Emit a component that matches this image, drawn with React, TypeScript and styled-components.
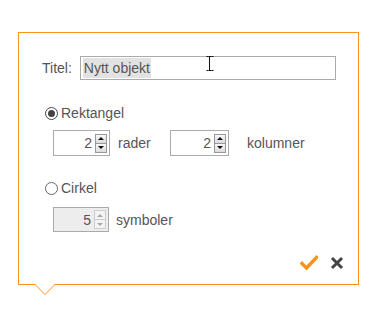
import React from "react";
import styled, { createGlobalStyle } from "styled-components";

const Global = createGlobalStyle`
  html, body { margin: 0; padding: 0; background: #fff; }
  body { font-family: "Liberation Sans", Arial, sans-serif; font-size: 14px; color: #555; }
`;

const Page = styled.div`
  box-sizing: border-box;
  min-height: 325px;
  padding: 32px 0 40px 18px;
`;

const Panel = styled.div`
  position: relative;
  box-sizing: border-box;
  width: 341px;
  height: 253px;
  border: 1px solid #f7941d;
  background: #fff;
  display: flex;
  flex-direction: column;
  padding: 23px 22px 0 23px;
`;

const Arrow = styled.svg`
  position: absolute;
  left: 16px;
  top: 100%;
  overflow: visible;
`;

const TitleRow = styled.div`
  display: flex;
  align-items: center;
  gap: 8px;
  height: 24px;
`;

const Label = styled.span`
  line-height: 16px;
  white-space: nowrap;
`;

const TextField = styled.div`
  position: relative;
  box-sizing: border-box;
  width: 258px;
  height: 24px;
  border: 1px solid #aaa;
  display: flex;
  align-items: center;
  padding-left: 2px;
`;

const Selected = styled.span`
  background: #e2e2e2;
  color: #555;
  line-height: 20px;
  padding: 0 1px;
`;

const IBeam = styled.svg`
  position: absolute;
  left: 125px;
  top: -2px;
`;

const RadioRow = styled.label<{ $top: number }>`
  display: flex;
  align-items: center;
  gap: 3px;
  margin-top: ${(p) => p.$top}px;
  margin-left: 3px;
  height: 16px;
`;

const RadioCircle = styled.span<{ $on?: boolean }>`
  box-sizing: border-box;
  width: 13px;
  height: 13px;
  border-radius: 50%;
  border: ${(p) => (p.$on ? "1.5px solid #444" : "1px solid #666")};
  display: flex;
  align-items: center;
  justify-content: center;
  &::after {
    content: "";
    display: ${(p) => (p.$on ? "block" : "none")};
    width: 7px;
    height: 7px;
    border-radius: 50%;
    background: #444;
  }
`;

const FieldRow = styled.div<{ $top: number }>`
  display: flex;
  align-items: center;
  margin-top: ${(p) => p.$top}px;
  margin-left: 11px;
`;

const Group = styled.div<{ $width?: number }>`
  display: flex;
  align-items: center;
  width: ${(p) => (p.$width ? `${p.$width}px` : "auto")};
`;

const SpinBox = styled.div<{ $w: number; $h: number; $disabled?: boolean }>`
  box-sizing: border-box;
  width: ${(p) => p.$w}px;
  height: ${(p) => p.$h}px;
  border: 1px solid #aaa;
  background: ${(p) => (p.$disabled ? "#ededed" : "#fff")};
  display: flex;
  align-items: center;
  justify-content: flex-end;
  padding-right: 2px;
  gap: 3px;
`;

const SpinValue = styled.span`
  color: #555;
  font-size: 14px;
`;

const SpinButtons = styled.div`
  display: flex;
  flex-direction: column;
`;

const SpinBtn = styled.div<{ $disabled?: boolean }>`
  box-sizing: border-box;
  width: 12px;
  height: 10px;
  border: 1px solid ${(p) => (p.$disabled ? "#ccc" : "#999")};
  background: ${(p) => (p.$disabled ? "#f4f4f4" : "linear-gradient(#f8f8f8, #dcdcdc)")};
  display: flex;
  align-items: center;
  justify-content: center;
  & + & {
    margin-top: -1px;
  }
`;

const Tri = styled.span<{ $down?: boolean; $disabled?: boolean }>`
  width: 0;
  height: 0;
  border-left: 3px solid transparent;
  border-right: 3px solid transparent;
  ${(p) =>
    p.$down
      ? `border-top: 3px solid ${p.$disabled ? "#aaa" : "#111"};`
      : `border-bottom: 3px solid ${p.$disabled ? "#aaa" : "#111"};`}
`;

const UnitLabel = styled.span<{ $gap: number }>`
  margin-left: ${(p) => p.$gap}px;
  white-space: nowrap;
`;

const Actions = styled.div`
  margin-top: auto;
  margin-bottom: 13px;
  margin-right: -8px;
  display: flex;
  justify-content: flex-end;
  align-items: center;
  gap: 12px;
`;

const IconBtn = styled.span`
  display: flex;
  cursor: pointer;
`;

function Spinner({ value, w, h, disabled }: { value: number; w: number; h: number; disabled?: boolean }) {
  return (
    <SpinBox $w={w} $h={h} $disabled={disabled}>
      <SpinValue>{value}</SpinValue>
      <SpinButtons>
        <SpinBtn $disabled={disabled}>
          <Tri $disabled={disabled} />
        </SpinBtn>
        <SpinBtn $disabled={disabled}>
          <Tri $down $disabled={disabled} />
        </SpinBtn>
      </SpinButtons>
    </SpinBox>
  );
}

export default function App() {
  return (
    <>
      <Global />
      <Page>
        <Panel>
          <TitleRow>
            <Label>Titel:</Label>
            <TextField>
              <Selected>Nytt objekt</Selected>
              <IBeam width="8" height="17" viewBox="0 0 8 17">
                <path d="M0.5 1.5 H2.5 M5.5 1.5 H7.5 M3.5 1.5 V15.5 M0.5 15.5 H2.5 M5.5 15.5 H7.5 M2.5 1.5 H5.5 M2.5 15.5 H5.5" stroke="#111" strokeWidth="1" fill="none" />
              </IBeam>
            </TextField>
          </TitleRow>

          <RadioRow $top={25}>
            <RadioCircle $on />
            <Label>Rektangel</Label>
          </RadioRow>

          <FieldRow $top={9}>
            <Group $width={117}>
              <Spinner value={2} w={57} h={26} />
              <UnitLabel $gap={8}>rader</UnitLabel>
            </Group>
            <Group>
              <Spinner value={2} w={59} h={26} />
              <UnitLabel $gap={18}>kolumner</UnitLabel>
            </Group>
          </FieldRow>

          <RadioRow $top={24}>
            <RadioCircle />
            <Label>Cirkel</Label>
          </RadioRow>

          <FieldRow $top={11}>
            <Group>
              <Spinner value={5} w={56} h={25} disabled />
              <UnitLabel $gap={7}>symboler</UnitLabel>
            </Group>
          </FieldRow>

          <Actions>
            <IconBtn>
              <svg width="18" height="16" viewBox="0 0 18 16">
                <path d="M2 8.5 L6.5 13 L16.5 2.5" stroke="#f7941d" strokeWidth="3.4" fill="none" strokeLinecap="square" />
              </svg>
            </IconBtn>
            <IconBtn>
              <svg width="14" height="14" viewBox="0 0 14 14">
                <path d="M2 2 L12 12 M12 2 L2 12" stroke="#444" strokeWidth="3" fill="none" strokeLinecap="butt" />
              </svg>
            </IconBtn>
          </Actions>
          <Arrow width="20" height="12" viewBox="0 0 20 12">
            <polygon points="0,0 20,0 10,10" fill="#fff" />
            <polyline points="0,0.5 10,10.5 20,0.5" fill="none" stroke="#f7941d" strokeWidth="1" />
          </Arrow>
        </Panel>
      </Page>
    </>
  );
}
